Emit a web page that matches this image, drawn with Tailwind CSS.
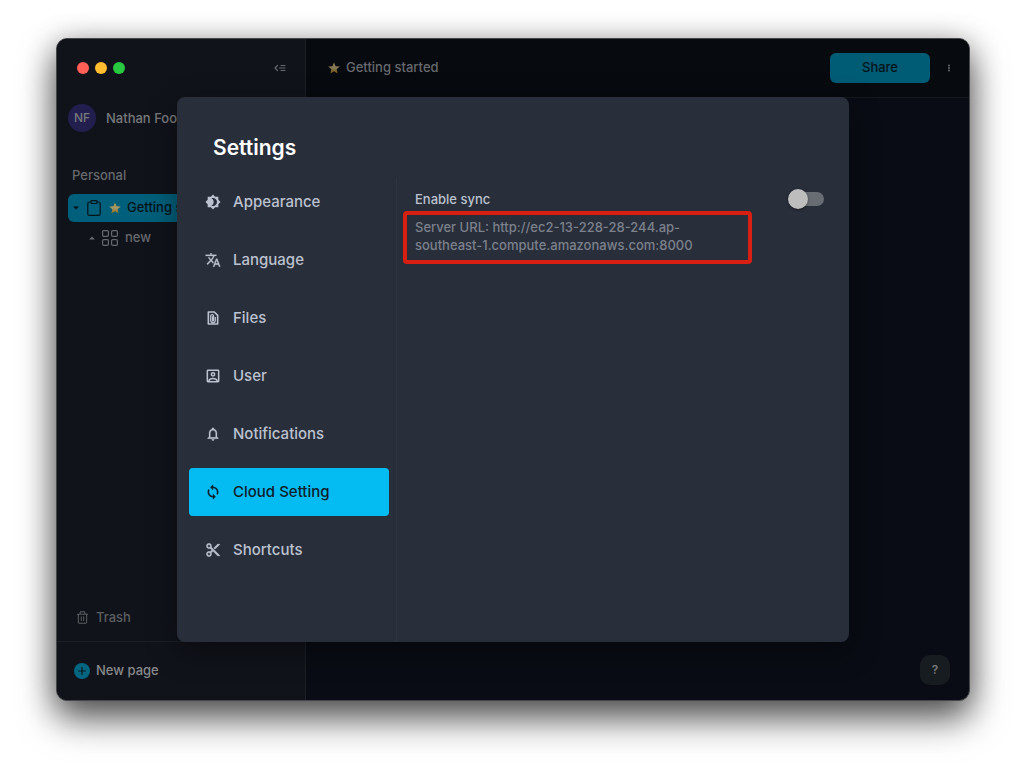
<!DOCTYPE html>
<html lang="en">
<head>
<meta charset="utf-8">
<meta name="viewport" content="width=device-width, initial-scale=1">
<title>Settings</title>
<script src="https://cdn.jsdelivr.net/npm/@tailwindcss/browser@4"></script>
</head>
<body class="bg-white font-['Inter',sans-serif] font-medium">
<svg class="absolute size-0" aria-hidden="true">
  <defs>
    <linearGradient id="gold" x1="0" y1="0" x2="0" y2="1"><stop offset="0" stop-color="#8a7a48"/><stop offset=".5" stop-color="#86795a"/><stop offset="1" stop-color="#765000"/></linearGradient>
    <linearGradient id="gold-bright" x1="0" y1="0" x2="0" y2="1"><stop offset="0" stop-color="#a88c3c"/><stop offset=".5" stop-color="#a8986a"/><stop offset="1" stop-color="#96680c"/></linearGradient>
    <symbol id="star" viewBox="0 0 24 24"><path d="M12 .8l3.300 7.700 8.200.7-6.200 5.500 1.900 8.200L12 18.600l-7.200 4.300 1.900-8.200L.5 9.200l8.200-.7z"/></symbol>
  </defs>
</svg>
<div class="flex min-h-screen px-14 pt-[38px] pb-[74px]">
  <div class="relative flex flex-1 overflow-hidden rounded-[11px] border border-[#45474b] bg-[#090c14] shadow-[0_18px_36px_rgba(0,0,0,0.6),0_4px_30px_rgba(0,0,0,0.3)]">
    <aside class="flex w-[249px] shrink-0 flex-col border-r border-[#1c2025] bg-[#10131a] text-[#77797c]">
      <div class="flex h-[58px] items-center justify-between pr-[19px] pl-5">
        <div class="flex gap-1.5">
          <button aria-label="Close" class="size-3 rounded-full bg-[#ff5f57]"></button>
          <button aria-label="Minimize" class="size-3 rounded-full bg-[#febc2e]"></button>
          <button aria-label="Zoom" class="size-3 rounded-full bg-[#28c840]"></button>
        </div>
        <button aria-label="Collapse sidebar">
          <svg class="size-3" viewBox="0 0 12 12" fill="none" stroke="#66696c" stroke-width="1.200" stroke-linecap="round"><path d="M3.500 3.500L1 6l2.500 2.500M7 3.500h4M5.500 6H11M7 8.500h4"/></svg>
        </button>
      </div>
      <div class="mt-[7px] flex items-center gap-2.5 pl-[11px]">
        <span class="flex size-7 items-center justify-center rounded-full bg-[#221f4e] text-xs">NF</span>
        <span class="text-[13px] leading-5">Nathan Foo</span>
      </div>
      <div class="mt-[31px] pl-[15px] text-[13px] leading-6 text-[#66696d]">Personal</div>
      <nav class="mt-[7px] flex flex-col px-[11px] text-[13px]">
        <a href="#" class="flex h-7 items-center rounded-md bg-[#005f7a] text-[#05121a]">
          <svg class="ml-[5px] size-1.5" viewBox="0 0 6 6"><path fill="currentColor" d="M0 1.500h6L3 4.500z"/></svg>
          <svg class="ml-[7px] size-4" viewBox="0 0 16 16" fill="none" stroke="currentColor" stroke-width="1.200" stroke-linejoin="round"><path d="M5 2H3.500A1.700 1.700 0 0 0 1.800 3.700v10A1.700 1.700 0 0 0 3.500 15.400h9a1.700 1.700 0 0 0 1.700-1.700v-10A1.700 1.700 0 0 0 12.500 2H11"/><rect x="5" y=".7" width="6" height="2.800" rx=".8"/></svg>
          <svg class="ml-[7px] size-3" fill="url(#gold-bright)"><use href="#star"/></svg>
          <span class="ml-1.5">Getting started</span>
        </a>
        <a href="#" class="mt-0.5 flex h-7 items-center text-[#66696d]">
          <svg class="ml-[21px] size-1.5" viewBox="0 0 6 6"><path fill="currentColor" d="M0 4.500h6L3 1.500z"/></svg>
          <svg class="ml-[7px] size-4" viewBox="0 0 16 16" fill="none" stroke="currentColor" stroke-width="1.200"><rect x=".6" y=".6" width="5.800" height="5.800" rx="1.200"/><rect x="9.600" y=".6" width="5.800" height="5.800" rx="1.200"/><rect x=".6" y="9.600" width="5.800" height="5.800" rx="1.200"/><rect x="9.600" y="9.600" width="5.800" height="5.800" rx="1.200"/></svg>
          <span class="ml-[7px]">new</span>
        </a>
      </nav>
      <a href="#" class="mt-auto flex h-12 items-center gap-[7px] border-b border-[#1c2025] pl-[19px] text-[13px] text-[#5c5f62]">
        <svg class="size-[13px]" viewBox="0 0 14 14" fill="none" stroke="currentColor" stroke-width="1.100" stroke-linecap="round" stroke-linejoin="round"><path d="M1.500 3.500h11M4.500 3.300V1.500a.8.800 0 0 1 .8-.8h3.400a.8.800 0 0 1 .8.800v1.800M2.500 3.500v8.500a1.200 1.200 0 0 0 1.200 1.200h6.600a1.200 1.200 0 0 0 1.200-1.200V3.500M5.700 6.300v4M8.300 6.300v4"/></svg>
        Trash
      </a>
      <button class="flex h-[58px] items-center gap-1.5 pl-[17px] text-[13px] font-medium text-[#88898b]">
        <svg class="size-4" viewBox="0 0 16 16"><circle cx="8" cy="8" r="8" fill="#006581"/><path d="M8 4.500v7M4.500 8h7" stroke="#0b161c" stroke-width="1.200" stroke-linecap="round"/></svg>
        New page
      </button>
    </aside>
    <main class="flex flex-1 flex-col">
      <header class="flex h-[59px] items-center border-b border-[#15191d] bg-[#070a0e] pr-4 pl-[22px]">
        <svg class="size-3" fill="url(#gold)"><use href="#star"/></svg>
        <span class="ml-1.5 text-[13px] text-[#66696d]">Getting started</span>
        <button class="ml-auto h-[30px] w-[100px] rounded-md bg-[#005b74] text-[13px] font-medium text-[#03131a]">Share</button>
        <button aria-label="More" class="ml-[15px]">
          <svg class="h-3 w-2" viewBox="0 0 8 12" fill="#727476"><circle cx="4" cy="3.500" r=".9"/><circle cx="4" cy="6" r=".9"/><circle cx="4" cy="8.500" r=".9"/></svg>
        </button>
      </header>
      <button class="mt-auto mr-[19px] mb-[15px] size-[30px] self-end rounded-[10px] bg-[#171c20] text-xs font-semibold text-[#77797b]">?</button>
    </main>

    <div class="absolute inset-0 flex items-center justify-center">
      <section role="dialog" aria-labelledby="settings-title" class="flex min-h-[545px] w-full max-w-2xl flex-col rounded-lg bg-[#282e3a] shadow-[0_9px_30px_rgba(0,0,0,0.4)]">
        <h1 id="settings-title" class="pt-9 pb-[15px] pl-9 text-[21px] leading-[30px] font-semibold text-white">Settings</h1>
        <div class="flex flex-1">
          <nav class="flex w-[220px] shrink-0 flex-col gap-2.5 border-r border-[#2f343f] pr-[7px] pl-3 text-[15px] text-[#bcc2cf]">
            <a href="#" class="flex h-12 items-center gap-3 rounded px-4">
              <svg class="size-4" viewBox="0 0 24 24" fill="currentColor"><path d="M20 8.690V4h-4.690L12 .690 8.690 4H4v4.690L.690 12 4 15.310V20h4.690L12 23.310 15.310 20H20v-4.690L23.310 12 20 8.690zM12 18c-.890 0-1.740-.2-2.500-.550C11.560 16.500 13 14.420 13 12s-1.440-4.500-3.500-5.450C10.260 6.200 11.110 6 12 6c3.310 0 6 2.690 6 6s-2.690 6-6 6z"/></svg>
              Appearance</a>
            <a href="#" class="flex h-12 items-center gap-3 rounded px-4">
              <svg class="size-4" viewBox="0 0 24 24" fill="currentColor" stroke="currentColor" stroke-width=".4"><path d="M12.870 15.070l-2.540-2.510.030-.030c1.740-1.940 2.980-4.170 3.710-6.530H17V4h-7V2H8v2H1v1.990h11.170C11.500 7.920 10.440 9.750 9 11.350 8.070 10.320 7.300 9.190 6.690 8h-2c.730 1.630 1.730 3.170 2.980 4.560l-5.090 5.020L4 19l5-5 3.110 3.110.760-2.040zM18.500 10h-2L12 22h2l1.120-3h4.750L21 22h2l-4.500-12zm-2.620 7l1.620-4.330L19.120 17h-3.240z"/></svg>
              Language</a>
            <a href="#" class="flex h-12 items-center gap-3 rounded px-4">
              <svg class="size-4" viewBox="0 0 24 24" fill="none" stroke="currentColor" stroke-width="2.400"><path stroke-linejoin="round" d="M14 3H5v18h14V8z"/><path stroke-width="1.800" d="M15.500 10.500v5a3.500 3.500 0 0 1-7 0V9a2.200 2.200 0 0 1 4.400 0v6.500a.9.900 0 0 1-1.800 0V9.500"/></svg>
              Files</a>
            <a href="#" class="flex h-12 items-center gap-3 rounded px-4">
              <svg class="size-4" viewBox="0 0 24 24" fill="none" stroke="currentColor" stroke-width="2.300"><rect x="3.500" y="3.500" width="17" height="17" rx="1"/><circle cx="12" cy="9.500" r="2.500"/><path d="M5.500 19.500c1-2.800 4-3.800 6.500-3.800s5.500 1 6.500 3.800"/></svg>
              User</a>
            <a href="#" class="flex h-12 items-center gap-3 rounded px-4">
              <svg class="size-4" viewBox="0 0 24 24" fill="currentColor" stroke="currentColor" stroke-width=".4"><path d="M12 22c1.100 0 2-.9 2-2h-4c0 1.100.9 2 2 2zm6-6v-5c0-3.070-1.630-5.640-4.500-6.320V4c0-.830-.670-1.500-1.500-1.500s-1.500.670-1.500 1.500v.680C7.640 5.360 6 7.920 6 11v5l-2 2v1h16v-1l-2-2zm-2 1H8v-6c0-2.480 1.510-4.500 4-4.500s4 2.020 4 4.500v6z"/></svg>
              Notifications</a>
            <a href="#" aria-current="page" class="flex h-12 items-center gap-3 rounded bg-[#05bcf2] px-4 text-[#10202b]">
              <svg class="size-4" viewBox="0 0 24 24" fill="currentColor" stroke="currentColor" stroke-width=".4"><path d="M12 4V1L8 5l4 4V6c3.310 0 6 2.690 6 6 0 1.010-.250 1.970-.7 2.800l1.460 1.460C19.540 15.030 20 13.570 20 12c0-4.420-3.580-8-8-8zm0 14c-3.310 0-6-2.690-6-6 0-1.010.250-1.970.7-2.800L5.240 7.740C4.460 8.970 4 10.430 4 12c0 4.420 3.580 8 8 8v3l4-4-4-4v3z"/></svg>
              Cloud Setting</a>
            <a href="#" class="flex h-12 items-center gap-3 rounded px-4">
              <svg class="size-4" viewBox="0 0 24 24" fill="currentColor" stroke="currentColor" stroke-width=".4"><path d="M9.640 7.640c.230-.5.360-1.050.360-1.640 0-2.210-1.790-4-4-4S2 3.790 2 6s1.790 4 4 4c.590 0 1.140-.130 1.640-.360L10 12l-2.360 2.360C7.140 14.130 6.590 14 6 14c-2.210 0-4 1.790-4 4s1.790 4 4 4 4-1.790 4-4c0-.590-.130-1.140-.360-1.640L12 14l7 7h3v-1L9.640 7.640zM6 8c-1.100 0-2-.890-2-2s.9-2 2-2 2 .890 2 2-.9 2-2 2zm0 12c-1.100 0-2-.890-2-2s.9-2 2-2 2 .890 2 2-.9 2-2 2zm6-7.500c-.280 0-.5-.220-.5-.5s.220-.5.5-.5.500.220.500.500-.220.500-.500.500zM19 3l-6 6 2 2 7-7V3z"/></svg>
              Shortcuts</a>
          </nav>
          <div class="flex flex-1 flex-col pt-[9px] pr-[25px] pl-1.5">
            <div class="flex h-6 items-center justify-between pl-3">
              <label for="sync" class="text-[13px] leading-6 text-[#bcc2cf]">Enable sync</label>
              <input id="sync" type="checkbox" role="switch" class="relative h-3.5 w-[34px] appearance-none rounded-full bg-[#686c73] before:absolute before:-top-[3px] before:-left-0.5 before:size-5 before:rounded-full before:bg-[#bdbdbd] before:shadow-[0_1px_3px_rgba(0,0,0,0.4)]">
            </div>
            <p class="w-[349px] rounded-sm border-4 border-[#d91f11] px-2 pt-[3px] pb-1.5 text-[13px] leading-[18px] text-[#7c818c]">Server URL: http://ec2-13-228-28-244.ap-southeast-1.compute.amazonaws.com:8000</p>
          </div>
        </div>
      </section>
    </div>
  </div>
</div>
</body>
</html>
